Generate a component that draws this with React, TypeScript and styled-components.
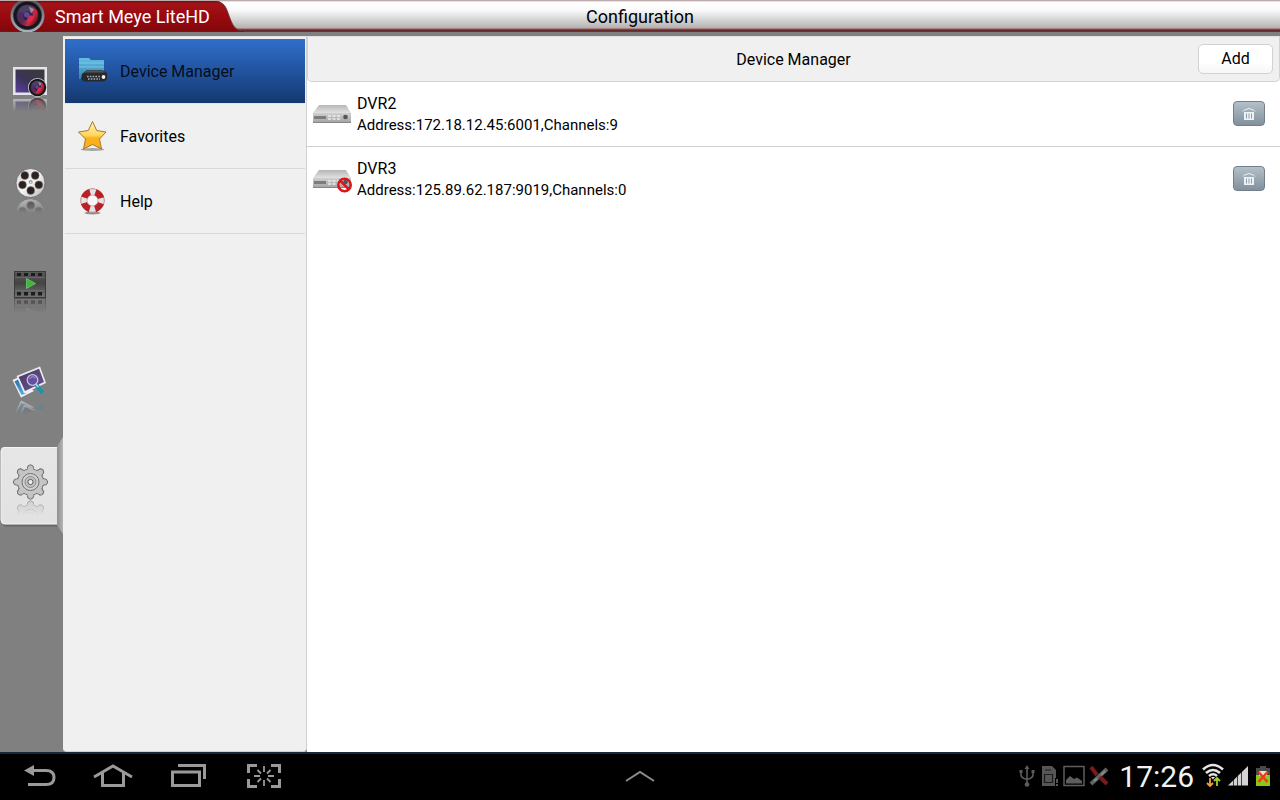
import React from "react";
import styled, { createGlobalStyle, css } from "styled-components";

const GlobalStyle = createGlobalStyle`
  *, *::before, *::after { box-sizing: border-box; }
  body {
    margin: 0;
    background: #000;
    color: #000;
    font-family: Roboto, "Liberation Sans", sans-serif;
    font-size: 16px;
    line-height: 20px;
  }
  button { font: inherit; color: inherit; border: 0; padding: 0; background: none; cursor: pointer; }
  h1, h2, h3, p, ul { margin: 0; padding: 0; font: inherit; }
  ul { list-style: none; }
  svg { display: block; }
`;

const Screen = styled.div`
  display: flex;
  flex-direction: column;
  min-height: 100vh;
`;

const TitleBar = styled.header`
  display: grid;
  grid-template-columns: 1fr auto 1fr;
  height: 32px;
  background: linear-gradient(#a88f90 0, #ffffff 2px, #fafafa 10px, #d4d4d4 20px, #b4b0b0 28px, #8d6060 29px, #6b2326 30px, #6a3a3c 32px);
`;

const Brand = styled.div`
  display: grid;
  grid-template-columns: 244px;
  justify-self: start;
  align-items: center;

  > * { grid-area: 1 / 1; }
`;

const BrandContent = styled.div`
  display: flex;
  align-items: center;
  gap: 10px;
  padding-left: 10px;
  color: #fff;
  font-size: 18px;
  line-height: 32px;
`;

const PageTitle = styled.h1`
  font-size: 18px;
  line-height: 33px;
`;

const Body = styled.div`
  display: flex;
  flex: 1;
  padding-top: 4px;
  background: #808080;
`;

const Rail = styled.nav`
  display: flex;
  flex: none;
  flex-direction: column;
  width: 63px;
  padding-top: 1px;
`;

const RailButton = styled.button`
  display: grid;
  height: 100px;

  > * { grid-area: 1 / 1; }
`;

const RailIcon = styled.svg`
  width: 37px;
  margin: 24px 0 0 12px;
  -webkit-box-reflect: below 0 linear-gradient(transparent 60%, rgba(0, 0, 0, 0.6));
`;

const Sidebar = styled.ul`
  flex: none;
  width: 244px;
  padding: 2px 1px 0 1px;
  background: #f0f0f0;
  border: 1px solid #d0d0d0;
  border-top-color: #e4e4e8;
  border-left-color: #f0f0f0;
  border-radius: 0 0 4px 4px;
`;

const SidebarButton = styled.button<{ $active?: boolean }>`
  display: flex;
  align-items: center;
  gap: 12px;
  width: 100%;
  height: 65px;
  padding-left: 11px;
  text-align: left;
  border-bottom: 1px solid #d9d9d9;
  ${(p) =>
    p.$active &&
    css`
      background: linear-gradient(#2f6fcb, #2356a3 45%, #14386f) padding-box;
      border-bottom-color: #e4e6ec;
      color: #050d1c;
    `}
`;

const SidebarLabel = styled.span`
  padding-top: 1px;
`;

const Detail = styled.main`
  flex: 1;
  min-width: 0;
  background: #fff;
`;

const DetailHeader = styled.div`
  display: grid;
  grid-template-columns: 1fr auto 1fr;
  align-items: center;
  height: 46px;
  background: #f0f0f0;
  border: 1px solid #d2d2d2;
  border-top-color: #e2e2e2;
  border-radius: 0 0 5px 5px;
`;

const DetailTitle = styled.h2`
  grid-column: 2;
  padding-top: 2px;
`;

const AddButton = styled.button`
  justify-self: end;
  width: 75px;
  height: 30px;
  margin-right: 6px;
  background: linear-gradient(#fff 60%, #f6f6f6);
  border: 1px solid #d2d2d2;
  border-radius: 5px;
`;

const DeviceRow = styled.li`
  display: flex;
  align-items: center;
  height: 65px;
  padding: 0 15px 1px 5px;
  border-bottom: 1px solid #d2d2d2;

  &:last-child { border-bottom-color: transparent; }
`;

const DeviceText = styled.div`
  flex: 1;
  padding: 2px 0 0 5px;
`;

const DeviceAddress = styled.p`
  font-size: 15px;
  line-height: 22px;
`;

const DeleteButton = styled.button`
  display: grid;
  place-items: center;
  width: 32px;
  height: 25px;
  background: linear-gradient(#b3c0c9, #9aa8b2 50%, #82919c);
  border: 1px solid #72808c;
  border-radius: 4px;
`;

const SystemBar = styled.footer`
  display: grid;
  grid-template-columns: 1fr auto 1fr;
  align-items: center;
  height: 48px;
  background: #000;
  border-top: 2px solid #16293a;
`;

const NavKeys = styled.div`
  display: flex;
`;

const NavKey = styled.button`
  display: grid;
  place-items: center;
  width: 75px;
  height: 46px;
  padding-bottom: 2px;
`;

const Status = styled.div`
  display: flex;
  align-items: center;
  justify-content: flex-end;
  gap: 4px;
  padding-right: 9px;

  > svg { margin-bottom: 2px; }
`;

const Clock = styled.time`
  padding: 0 4px 0 6px;
  color: #f2f2f2;
  font-size: 30px;
  line-height: 46px;
`;

function Lens({ x, y, r, id }: { x: number; y: number; r: number; id: string }) {
  return (
    <g transform={`translate(${x} ${y}) scale(${r / 10})`}>
      <defs>
        <linearGradient id={id} x1="0" y1="0.2" x2="1" y2="0.8">
          <stop offset="0" stopColor="#3c3370" />
          <stop offset="0.45" stopColor="#5b2850" />
          <stop offset="0.7" stopColor="#d02740" />
          <stop offset="1" stopColor="#5c0e18" />
        </linearGradient>
      </defs>
      <circle r="10" fill="#15151a" />
      <circle r="7.8" fill={`url(#${id})`} />
      <path d="M-7 -3 A7.6 7.6 0 0 1 5 -5.6 L1 -1 Z" fill="#4c4a66" opacity=".7" />
      <circle cx=".5" cy=".5" r="3.6" fill="#3a1c48" />
      <path d="M-1 4.5 A4.6 4.6 0 0 0 5 0 L1 0 Z" fill="#e02c48" />
      <circle cx="-.5" cy="-.5" r="2" fill="#5a4a9a" />
      <path d="M1 -6.500 L5 -4.500 L2.500 -1.500 Z" fill="#b9a9c0" opacity=".7" />
    </g>
  );
}

function BrandArt() {
  return (
    <svg width="244" height="32" aria-hidden="true">
      <defs>
        <linearGradient id="brandRed" x1="0" y1="0" x2="0" y2="1">
          <stop offset="0" stopColor="#6e1014" />
          <stop offset=".08" stopColor="#a31318" />
          <stop offset=".5" stopColor="#98090f" />
          <stop offset="1" stopColor="#7d080c" />
        </linearGradient>
      </defs>
      <path d="M0 0 H217 C224 2 226 6 228 12 C232 23 234 29 242 30 V32 H0 Z" fill="url(#brandRed)" />
      <path d="M217 0 C224 2 226 6 228 12 C232 23 234 29 242 30" fill="none" stroke="#6f3a3d" />
      <path d="M0 31 H244" stroke="#5f2023" strokeWidth="2" />
    </svg>
  );
}

function BrandLogo() {
  return (
    <svg width="35" height="32" aria-hidden="true">
      <defs>
        <linearGradient id="ring" x1="0" y1="0" x2="0" y2="1">
          <stop offset="0" stopColor="#4b525b" />
          <stop offset=".6" stopColor="#8793a0" />
          <stop offset="1" stopColor="#a7b3be" />
        </linearGradient>
      </defs>
      <circle cx="17.5" cy="14.5" r="17" fill="url(#ring)" />
      <circle cx="17.5" cy="14.5" r="14.5" fill="#3c4149" />
      <Lens x={17.5} y={14.5} r={13.8} id="logoLens" />
    </svg>
  );
}

function LiveIcon() {
  return (
    <RailIcon height="36" viewBox="0 0 37 36" aria-hidden="true">
      <defs>
        <linearGradient id="liveScreen" x1="0" y1="1" x2=".7" y2="0">
          <stop offset="0" stopColor="#5a3fa0" />
          <stop offset=".5" stopColor="#3c3358" />
          <stop offset="1" stopColor="#3a3a3c" />
        </linearGradient>
      </defs>
      <rect x="1" y="6" width="34" height="28" fill="#e6e6ea" />
      <rect x="3.500" y="8.500" width="29" height="23" fill="url(#liveScreen)" />
      <circle cx="25.500" cy="26.500" r="9.500" fill="#d6d6da" />
      <Lens x={25.5} y={26.5} r={8.7} id="liveLens" />
    </RailIcon>
  );
}

function ReelIcon() {
  const holes = [[12.8, 14.5], [23.2, 14.5], [10.5, 23.8], [26.8, 23.8], [18.7, 29.5]];
  return (
    <RailIcon height="37" viewBox="0 0 37 37" aria-hidden="true">
      <defs>
        <linearGradient id="reel" x1="0" y1="0" x2="1" y2="1">
          <stop offset="0" stopColor="#d2d2d2" />
          <stop offset=".5" stopColor="#f4f4f4" />
          <stop offset="1" stopColor="#b4b4b4" />
        </linearGradient>
      </defs>
      <circle cx="18.5" cy="22" r="14.5" fill="url(#reel)" stroke="#666" strokeWidth=".8" />
      {holes.map(([x, y]) => (
        <circle key={`${x}-${y}`} cx={x} cy={y} r="3.9" fill="#2c211d" stroke="#777" strokeWidth=".5" />
      ))}
      <circle cx="18.7" cy="21" r="2" fill="#999" />
      <circle cx="18.7" cy="21.5" r=".9" fill="#e8e8e8" />
    </RailIcon>
  );
}

function FilmIcon() {
  return (
    <RailIcon height="37" viewBox="0 0 37 37" aria-hidden="true">
      <defs>
        <linearGradient id="film" x1="0" y1="0" x2="0" y2="1">
          <stop offset="0" stopColor="#5a5a5a" />
          <stop offset=".45" stopColor="#444" />
          <stop offset="1" stopColor="#747474" />
        </linearGradient>
      </defs>
      <rect x="2.5" y="10.5" width="31" height="26" fill="url(#film)" stroke="#3b3b3b" />
      {[5, 12, 19, 26].map((x) => (
        <g key={x} fill="#1c1c1c">
          <rect x={x} y="12" width="4" height="3" />
          <rect x={x} y="31" width="4" height="3.5" />
        </g>
      ))}
      <path d="M3 16.5H33M3 29.5H33" stroke="#777" strokeWidth=".6" />
      <path d="M14.5 17.5 L23.5 22.5 L14.5 27.5 Z" fill="#3fb53b" stroke="#7fe07a" strokeWidth=".6" />
    </RailIcon>
  );
}

function PhotosIcon() {
  return (
    <RailIcon height="38" viewBox="0 0 37 38" aria-hidden="true">
      <defs>
        <linearGradient id="photo" x1="0" y1="0" x2="1" y2="1">
          <stop offset="0" stopColor="#45395c" />
          <stop offset="1" stopColor="#6a5796" />
        </linearGradient>
        <linearGradient id="photoBack" x1="0" y1="0" x2="0" y2="1">
          <stop offset="0" stopColor="#2b6fae" />
          <stop offset="1" stopColor="#55aee0" />
        </linearGradient>
      </defs>
      <path d="M.5 19 L6 16.500 L22 30 L9 36.500 Z" fill="#eef2f5" />
      <path d="M2.500 20.500 L6 18.500 L14 32.500 L9.500 34 Z" fill="url(#photoBack)" />
      <path d="M4.500 15 L28 5.500 L34 22 L12 32.500 Z" fill="#eeeaf2" />
      <path d="M6.700 16 L27 7.800 L32 21 L13 30 Z" fill="url(#photo)" />
      <circle cx="20.500" cy="19" r="5.300" fill="#6550a0" stroke="#c9bfe2" strokeWidth="1.300" />
      <path d="M17.500 18 Q20 14 23.500 17" fill="none" stroke="#aaa0d0" />
      <path d="M24 23.500 L30.500 32" stroke="#1c93ad" strokeWidth="4" />
      <path d="M23.500 23 L26.500 26" stroke="#a9e0ec" strokeWidth="1.500" />
    </RailIcon>
  );
}

function GearIcon() {
  const teeth = [0, 45, 90, 135, 180, 225, 270, 315];
  return (
    <RailIcon height="39" viewBox="0 0 37 39" aria-hidden="true">
      <g transform="translate(18.500 21)">
        <g fill="#c2c2c2" stroke="#6e6e6e">
          {teeth.map((a) => (
            <path key={a} transform={`rotate(${a})`} d="M-4.500 -12 Q-2.600 -13 -2.600 -16 Q0 -18.500 2.600 -16 Q2.600 -13 4.500 -12" />
          ))}
          <circle r="13" />
        </g>
        <circle r="12.400" fill="#c6c6c6" />
        {teeth.map((a) => (
          <path key={a} transform={`rotate(${a})`} d="M-3.600 -11 L-2.100 -14.500 H2.100 L3.600 -11Z" fill="#c4c4c4" />
        ))}
        <circle r="8.500" fill="#d0d0d0" stroke="#707070" />
        <circle r="5.500" fill="#c0c0c0" stroke="#8a8a8a" />
        <circle r="2.600" fill="#eee" stroke="#5a5a5a" />
      </g>
    </RailIcon>
  );
}

function ActivePlate() {
  return (
    <svg width="63" height="100" aria-hidden="true">
      <defs>
        <linearGradient id="plate" x1="0" y1="0" x2="0" y2="1">
          <stop offset="0" stopColor="#e6e6e6" />
          <stop offset="1" stopColor="#e2e2e2" />
        </linearGradient>
        <linearGradient id="fold" x1="0" y1="0" x2="1" y2="0">
          <stop offset="0" stopColor="#8f8f8f" />
          <stop offset="1" stopColor="#b4b4b4" />
        </linearGradient>
      </defs>
      <path d="M57 9 L63 0 V97 L57 88 Z" fill="url(#fold)" />
      <path d="M4 88.500 H57" stroke="#666" strokeWidth="2" />
      <path d="M57 10 H5 Q1 10 1 14 V83 Q1 87 5 87 H57 Z" fill="url(#plate)" />
      <path d="M57 10.500 H5 Q1 10.500 1 14 V83 Q1 87 5 87 H57" fill="none" stroke="#f4f4f4" />
    </svg>
  );
}

function DvrFolderIcon() {
  return (
    <svg width="32" height="32" aria-hidden="true">
      <defs>
        <linearGradient id="folder" x1="0" y1="0" x2="0" y2="1">
          <stop offset="0" stopColor="#63bce4" />
          <stop offset="1" stopColor="#3384ad" />
        </linearGradient>
        <linearGradient id="recorder" x1="0" y1="0" x2="0" y2="1">
          <stop offset="0" stopColor="#66696c" />
          <stop offset="1" stopColor="#2c2e31" />
        </linearGradient>
      </defs>
      <path d="M3 3 H13 L15 5 H28 V24 H3 Z" fill="url(#folder)" />
      <path d="M3 8 H28 M3 12 H28" stroke="#8dd4f0" strokeWidth=".7" />
      <path d="M6 19 L11 15 H26 L31 18 V24 L28 26.500 H8 L5 24 Z" fill="#25282c" />
      <path d="M7 18.500 L11 15.500 H26 L30 18.500 Z" fill="url(#recorder)" />
      <path d="M11 21.500 H24 M12 24 H24" stroke="#a9adb2" strokeWidth="1.300" strokeDasharray="1.600 1.200" />
      <circle cx="27.500" cy="22" r="1.900" fill="#eee" />
    </svg>
  );
}

function StarIcon() {
  return (
    <svg width="32" height="32" aria-hidden="true">
      <defs>
        <linearGradient id="star" x1="0" y1="0" x2="0" y2="1">
          <stop offset="0" stopColor="#fff3b4" />
          <stop offset=".5" stopColor="#ffd75e" />
          <stop offset=".6" stopColor="#f9b31c" />
          <stop offset="1" stopColor="#f8ae1c" />
        </linearGradient>
      </defs>
      <ellipse cx="16.5" cy="29.5" rx="12" ry="1.5" fill="#a5a5a5" />
      <path d="M16.5 1.5 L20.7 10.5 L30 12 L23.5 19 L25.5 29 L16.5 24.5 L7.5 29 L9.5 19 L2.5 12 L12.3 10.5 Z" fill="url(#star)" stroke="#a5792c" strokeLinejoin="round" />
    </svg>
  );
}

function LifebuoyIcon() {
  return (
    <svg width="32" height="32" aria-hidden="true">
      <ellipse cx="16.5" cy="28" rx="8" ry="1.5" fill="#8f8f8f" />
      <circle cx="16.5" cy="15.5" r="8.7" fill="none" stroke="#b92126" strokeWidth="6.6" />
      <circle cx="16.5" cy="15.5" r="8.7" fill="none" stroke="#e4e4e4" strokeWidth="6.8" strokeDasharray="5.4 8.266" strokeDashoffset="2.7" />
      <circle cx="16.5" cy="15.5" r="11.7" fill="none" stroke="#8e2628" strokeWidth=".6" opacity=".5" />
      <circle cx="16.5" cy="15.5" r="5.4" fill="#f8f8f8" stroke="#ad8888" strokeWidth=".6" />
    </svg>
  );
}

function DvrIcon({ offline }: { offline?: boolean }) {
  return (
    <svg width="40" height="30" role="img" aria-label={offline ? "Offline recorder" : "Recorder"}>
      <defs>
        <linearGradient id="dvrTop" x1="0" y1="0" x2="0" y2="1">
          <stop offset="0" stopColor="#b6b6b6" />
          <stop offset="1" stopColor="#e2e2e2" />
        </linearGradient>
        <linearGradient id="dvrFace" x1="0" y1="0" x2="0" y2="1">
          <stop offset="0" stopColor="#d0d0d0" />
          <stop offset="1" stopColor="#a2a2a2" />
        </linearGradient>
      </defs>
      <path d="M7 6 H34 L39 14 H1 Z" fill="url(#dvrTop)" />
      <path d="M1 14 H39 V23 Q39 24 38 24 H2 Q1 24 1 23 Z" fill="url(#dvrFace)" />
      <path d="M1 23.500 H39" stroke="#858585" />
      <rect x="2" y="17" width="12" height="3" fill="#7c7c7c" />
      <path d="M16 17 H28 M16 20 H28" stroke="#ececec" strokeWidth="1.600" strokeDasharray="3 1.500" />
      <circle cx="33.500" cy="18" r="2.300" fill="#555" />
      {offline && (
        <g fill="none" stroke="#dd1518" strokeWidth="2.600">
          <circle cx="32.500" cy="21" r="6.200" />
          <path d="M28.200 16.700 L36.800 25.300" />
        </g>
      )}
    </svg>
  );
}

function TrashIcon() {
  return (
    <svg width="14" height="14" aria-hidden="true" fill="none" stroke="#eef2f5">
      <path d="M1 4.500 Q2 3 4 2.500 Q7 .5 10 2.500 Q12 3 13 4.500" />
      <path d="M2 5 H12 V13 H2 Z" fill="#eef2f5" stroke="none" />
      <path d="M4.500 6.500 V11.500 M7 6.500 V11.500 M9.500 6.500 V11.500" stroke="#8fa0ac" />
    </svg>
  );
}

const railItems = [
  { label: "Live view", Icon: LiveIcon },
  { label: "Recordings", Icon: ReelIcon },
  { label: "Playback", Icon: FilmIcon },
  { label: "Pictures", Icon: PhotosIcon },
  { label: "Configuration", Icon: GearIcon, active: true },
];

const sections = [
  { label: "Device Manager", Icon: DvrFolderIcon, active: true },
  { label: "Favorites", Icon: StarIcon },
  { label: "Help", Icon: LifebuoyIcon },
];

const devices = [
  { name: "DVR2", address: "172.18.12.45:6001", channels: 9 },
  { name: "DVR3", address: "125.89.62.187:9019", channels: 0 },
];

export default function App() {
  return (
    <Screen>
      <GlobalStyle />
      <TitleBar>
        <Brand>
          <BrandArt />
          <BrandContent>
            <BrandLogo />
            Smart Meye LiteHD
          </BrandContent>
        </Brand>
        <PageTitle>Configuration</PageTitle>
      </TitleBar>

      <Body>
        <Rail>
          {railItems.map(({ label, Icon, active }) => (
            <RailButton key={label} aria-label={label} aria-current={active ? "page" : undefined}>
              {active && <ActivePlate />}
              <Icon />
            </RailButton>
          ))}
        </Rail>

        <Sidebar>
          {sections.map(({ label, Icon, active }) => (
            <li key={label}>
              <SidebarButton $active={active}>
                <Icon />
                <SidebarLabel>{label}</SidebarLabel>
              </SidebarButton>
            </li>
          ))}
        </Sidebar>

        <Detail>
          <DetailHeader>
            <DetailTitle>Device Manager</DetailTitle>
            <AddButton>Add</AddButton>
          </DetailHeader>
          <ul>
            {devices.map((d) => (
              <DeviceRow key={d.name}>
                <DvrIcon offline={d.channels === 0} />
                <DeviceText>
                  <h3>{d.name}</h3>
                  <DeviceAddress>{`Address:${d.address},Channels:${d.channels}`}</DeviceAddress>
                </DeviceText>
                <DeleteButton aria-label={`Delete ${d.name}`}>
                  <TrashIcon />
                </DeleteButton>
              </DeviceRow>
            ))}
          </ul>
        </Detail>
      </Body>

      <SystemBar>
        <NavKeys>
          <NavKey aria-label="Back">
            <svg width="36" height="26" fill="none" stroke="#9a9a9a" strokeWidth="3">
              <path d="M12 7.500 H26 Q34 7.500 34 14.500 Q34 21.500 26 21.500 H8" />
              <path d="M4 7.500 L14 2 V13 Z" fill="#9a9a9a" stroke="none" />
            </svg>
          </NavKey>
          <NavKey aria-label="Home">
            <svg width="40" height="26" fill="none" stroke="#9a9a9a" strokeWidth="3">
              <path d="M1 14 L20 3 L39 14" />
              <path d="M9.500 10 V22.500 H30.500 V10" />
            </svg>
          </NavKey>
          <NavKey aria-label="Recent apps">
            <svg width="40" height="26" fill="none" stroke="#9a9a9a" strokeWidth="3">
              <path d="M4.500 9 H31.500 V22.500 H4.500 Z" />
              <path d="M10 2.500 H36.500 V16" />
            </svg>
          </NavKey>
          <NavKey aria-label="Screenshot">
            <svg width="40" height="26" fill="none" stroke="#9a9a9a" strokeWidth="3">
              <path d="M14 2.500 H5.500 V10 M28 2.500 H36.500 V10 M5.500 16 V23.500 H14 M36.500 16 V23.500 H28" />
              <path d="M21 3 V9 M21 17 V23 M11 13 H17 M25 13 H31 M14.500 7 L18 10.500 M27.500 7 L24 10.500 M14.500 19 L18 15.500 M27.500 19 L24 15.500" strokeWidth="1.800" />
            </svg>
          </NavKey>
        </NavKeys>

        <NavKey aria-label="Expand">
          <svg width="32" height="14" fill="none" stroke="#8c8c8c" strokeWidth="2">
            <path d="M2 12 L16 3 L30 12" />
          </svg>
        </NavKey>

        <Status>
          <svg width="16" height="22" aria-hidden="true" fill="none" stroke="#5c5c5c" strokeWidth="1.600">
            <path d="M8 2 V19 M2 7 V10 Q2 13 8 14.500 M14 7 V10 Q14 13 8 14.500" />
            <path d="M8 0 L10.500 4 H5.500 Z M.5 5 H3.500 V8 H.5Z M12.500 5 H15.500 V8 H12.500Z" fill="#5c5c5c" stroke="none" />
            <circle cx="8" cy="19.500" r="2.300" fill="#5c5c5c" stroke="none" />
          </svg>
          <svg width="20" height="22" aria-hidden="true" fill="#565656">
            <path d="M3 1 H13 L17 5 V13 H16 V21 H3 Z" />
            <path d="M5.500 9.500 H13.500 V17.500 H5.500 Z M6 5H12" fill="none" stroke="#1c1c1c" strokeWidth="1.200" />
            <path d="M8 11.500 H11 V15.500 H8Z M17 14 H19 V18 H17Z M17 19 H19 V21 H17Z" />
          </svg>
          <svg width="22" height="22" aria-hidden="true" fill="none" stroke="#5e5e5e" strokeWidth="1.500">
            <path d="M1 1.500 H21 V20.500 H1 Z" />
            <path d="M3 18.500 V15 L7 11 L11 14 L14 12.500 L19 16 V18.500 Z" fill="#5e5e5e" stroke="none" />
          </svg>
          <svg width="20" height="22" aria-hidden="true" fill="none" strokeWidth="4">
            <path d="M2 19 L18 4" stroke="#5f6565" />
            <path d="M2 2 L8 10 M11 12 L18 19" stroke="#7b1a1c" />
            <path d="M5 16 L8 13.500 M12 10 L16 6" stroke="#858b8b" strokeWidth="2" />
          </svg>
          <Clock>17:26</Clock>
          <svg width="22" height="26" aria-hidden="true" fill="none" stroke="#e4e4e4" strokeWidth="2.600">
            <path d="M1 6.500 Q11 -2.500 21 6.500 M4 10 Q11 4 18 10 M7 13 Q11 9.500 15 13" />
            <path d="M9 14 H13 L11 16.500Z" fill="#e4e4e4" stroke="none" />
            <path d="M8 15 V23 M5 20 L8 23 L11 20" stroke="#f2a03c" strokeWidth="1.800" />
            <path d="M15 23 V15 M12 18 L15 15 L18 18" stroke="#9bd41e" strokeWidth="1.800" />
          </svg>
          <svg width="20" height="22" aria-hidden="true" fill="#d4d4d4">
            <path d="M0 20.500 L20 1 V20.500 Z" />
            <path d="M5.500 21 V14 M9.500 21 V10 M13.500 21 V6" stroke="#000" strokeWidth=".7" />
          </svg>
          <svg width="19" height="22" viewBox="3 0 19 22" aria-hidden="true">
            <path d="M11 1 H17 V3 H21 V21 H7 V3 H11 Z" fill="#4a4a4a" />
            <path d="M7 10 H21 V21 H7 Z" fill="#8ac814" />
            <path d="M10 6 H18 V11 H10Z" fill="#e9e4cf" />
            <path d="M9.500 7 L18.500 17 M18.500 7 L9.500 17" stroke="#ee3a22" strokeWidth="2.600" />
          </svg>
        </Status>
      </SystemBar>
    </Screen>
  );
}
